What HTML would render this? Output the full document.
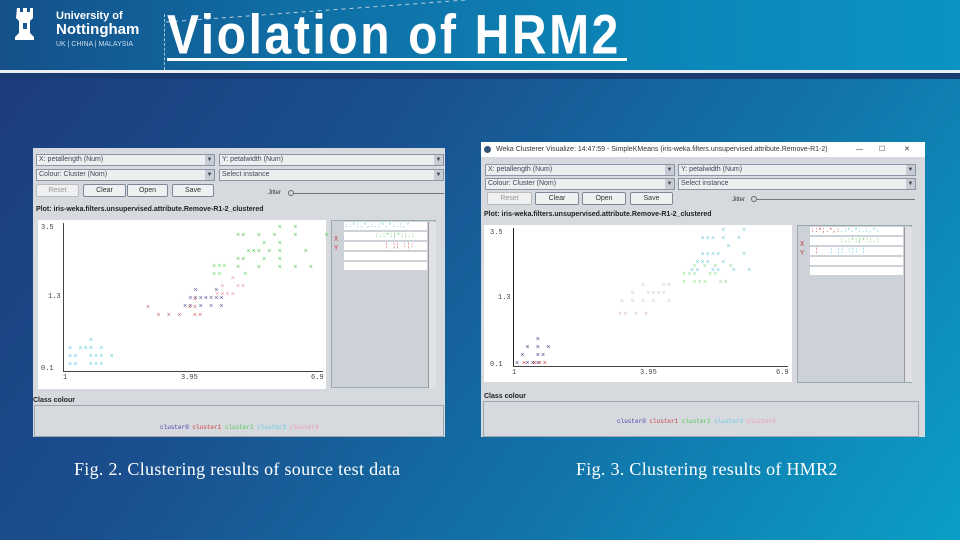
<!DOCTYPE html><html><head><meta charset="utf-8"><style>
*{margin:0;padding:0;box-sizing:border-box}
body{width:960px;height:540px;overflow:hidden;position:relative;font-family:"Liberation Sans",sans-serif;background:linear-gradient(125deg,#1c3a7c 0%,#1a4f8e 35%,#1178ac 70%,#0a9fc6 100%)}
.top{position:absolute;left:0;top:0;width:960px;height:70px;background:linear-gradient(90deg,#15508a 0%,#0f6ea4 30%,#0c86b8 70%,#0a94c2 100%)}
.wl{position:absolute;left:0;top:70px;width:960px;height:3px;background:#e8eef4}
.dk{position:absolute;left:0;top:73px;width:960px;height:6px;background:#1a3a70}
.a{position:absolute}
.panel{position:absolute;background:#d6d9de}
.cb{position:absolute;height:12px;background:#eceef0;border:1px solid #8a96a8;font-size:7px;color:#445;padding-left:2px;line-height:10px}
.cb i{position:absolute;right:0;top:0;width:9px;height:10px;background:#c8ccd4;font-style:normal;font-size:6px;text-align:center}
.bt{position:absolute;height:13px;background:#eef0f2;border:1px solid #7e8898;border-radius:2px;font-size:7px;text-align:center;line-height:11px;color:#333}
.t7{position:absolute;font-size:7px;color:#222;font-weight:bold}
.plot{position:absolute;background:#fff}
.leg{position:absolute;background:#cdd1d8;border:1px solid #9aa}
.bx{position:absolute;border:1px solid #a0a6b0;background:#d6d9de}
.p{position:absolute;font-size:7px;line-height:8px;letter-spacing:1px;white-space:pre;font-family:"Liberation Mono",monospace}
.ax{position:absolute;font-family:"Liberation Mono",monospace;font-size:7px;color:#444}
.cap{position:absolute;font-family:"Liberation Serif",serif;font-size:18px;color:#fff;white-space:nowrap}
.rows{position:absolute;background:repeating-linear-gradient(180deg,#fff 0 8px,#cdd1d8 8px 10px)}
</style></head><body>
<div class="top"></div><div class="wl"></div><div class="dk"></div>
<svg class="a" style="left:12px;top:6px" width="26" height="36" viewBox="0 0 26 36"><path d="M5 2h3v4h3V2h4v4h3V2h3v10l-3 3v12l4 4v3H3v-3l4-4V15l-3-3z" fill="#fff"/><rect x="11" y="17" width="4" height="6" fill="#1a5a92"/></svg>
<div class="a" style="left:56px;top:11px;color:#fff;font-size:11px;font-weight:bold;line-height:11px">University of</div>
<div class="a" style="left:56px;top:22px;color:#fff;font-size:15px;font-weight:bold;line-height:16px">Nottingham</div>
<div class="a" style="left:56px;top:41px;color:#cde;font-size:7px">UK | CHINA | MALAYSIA</div>
<div class="a" style="left:164px;top:14px;height:56px;border-left:1px dashed #9cc"></div>
<svg class="a" style="left:166px;top:0" width="300" height="26"><path d="M0 22 L300 0" stroke="#bcd" stroke-dasharray="4 4" fill="none"/></svg>
<div class="a" style="left:167px;top:4px;color:#fff;font-size:48px;font-weight:bold;line-height:56px;letter-spacing:2.6px;transform:scaleY(1.15);transform-origin:0 0;white-space:nowrap">Violation of HRM2</div>
<div class="a" style="left:167px;top:58px;width:460px;height:3px;background:#fff"></div>

<!-- left panel -->
<div class="panel" style="left:33px;top:148px;width:412px;height:289px"></div>
<div class="cb" style="left:36px;top:154px;width:179px">X: petallength (Num)<i>▼</i></div>
<div class="cb" style="left:219px;top:154px;width:225px">Y: petalwidth (Num)<i>▼</i></div>
<div class="cb" style="left:36px;top:169px;width:179px">Colour: Cluster (Nom)<i>▼</i></div>
<div class="cb" style="left:219px;top:169px;width:225px">Select instance<i>▼</i></div>
<div class="bt" style="left:36px;top:184px;width:43px;color:#999;border-color:#bbb">Reset</div>
<div class="bt" style="left:83px;top:184px;width:43px">Clear</div>
<div class="bt" style="left:127px;top:184px;width:41px">Open</div>
<div class="bt" style="left:172px;top:184px;width:42px">Save</div>
<div class="a" style="left:268px;top:190px;font-size:6px;color:#333">Jitter</div>
<div class="a" style="left:288px;top:190px;width:6px;height:6px;border:1px solid #666;border-radius:50%"></div>
<div class="a" style="left:294px;top:193px;width:150px;height:1px;background:#777"></div>
<div class="t7" style="left:36px;top:206px">Plot: iris-weka.filters.unsupervised.attribute.Remove-R1-2_clustered</div>
<div class="plot" style="left:38px;top:220px;width:288px;height:169px"></div>
<div class="a" style="left:63px;top:223px;width:1px;height:148px;background:#444"></div>
<div class="a" style="left:63px;top:371px;width:260px;height:1px;background:#444"></div>
<div class="ax" style="left:41px;top:224px">3.5</div><div class="ax" style="left:48px;top:293px">1.3</div><div class="ax" style="left:41px;top:365px">0.1</div>
<div class="ax" style="left:63px;top:374px">1</div><div class="ax" style="left:181px;top:374px">3.95</div><div class="ax" style="left:311px;top:374px">6.9</div>
<div class="p" style="left:236px;top:224px;color:#5c5">        ×  ×
××  ×  ×   ×     ×
     ×  ×
  ××× × ×    ×
××   ×  ×
×   ×   ×  ×  ×</div>
<div class="p" style="left:212px;top:263px;color:#6d6">×××
××    ×</div>
<div class="p" style="left:215px;top:275px;color:#e9a">   ×
 ×  ××
××××</div>
<div class="p" style="left:183px;top:287px;color:#559">  ×   ×
 ×××××××
×× × × ×</div>
<div class="p" style="left:146px;top:296px;color:#c66">         ×
×       ××
  × × ×  ××</div>
<div class="p" style="left:68px;top:337px;color:#6cd">    ×
× ××× ×
××  ××× ×
××  ×××</div>
<div class="leg" style="left:331px;top:220px;width:105px;height:168px"></div>
<div class="rows" style="left:344px;top:222px;width:83px;height:50px"></div>
<div class="p" style="left:345px;top:222px;color:#6cd;font-size:6px;letter-spacing:0">::*:.*,:.:*.*:.:,*</div>
<div class="p" style="left:375px;top:232px;color:#5c5;font-size:6px;letter-spacing:0">:.:*:|*::.:</div>
<div class="p" style="left:385px;top:242px;color:#c44;font-size:6px;letter-spacing:0">¦ ¦¦ :¦:</div>
<div class="p" style="left:334px;top:236px;color:#c44;font-size:7px;line-height:9px">X
Y</div>
<div class="a" style="left:428px;top:222px;width:8px;height:166px;background:#e0e2e6;border-left:1px solid #999"></div>
<div class="a" style="left:33px;top:397px;font-size:7px;font-weight:bold;color:#222">Class colour</div>
<div class="bx" style="left:34px;top:405px;width:410px;height:32px"></div>
<div class="a" style="left:160px;top:424px;font-family:'Liberation Mono',monospace;font-size:6px"><span style="color:#44a">cluster0</span> <span style="color:#c44">cluster1</span> <span style="color:#5c5">cluster2</span> <span style="color:#6cd">cluster3</span> <span style="color:#e9a">cluster4</span></div>

<!-- right panel -->
<div class="panel" style="left:481px;top:142px;width:444px;height:295px"></div>
<div class="a" style="left:481px;top:142px;width:444px;height:15px;background:#fff;font-size:7px;color:#333;line-height:15px;padding-left:15px;white-space:nowrap">Weka Clusterer Visualize: 14:47:59 - SimpleKMeans (iris-weka.filters.unsupervised.attribute.Remove-R1-2)<span style="position:absolute;left:375px">—</span><span style="position:absolute;left:398px">☐</span><span style="position:absolute;left:423px">✕</span></div>
<div class="a" style="left:484px;top:146px;width:7px;height:7px;border-radius:50%;background:#357"></div>
<div class="cb" style="left:485px;top:164px;width:190px">X: petallength (Num)<i>▼</i></div>
<div class="cb" style="left:678px;top:164px;width:238px">Y: petalwidth (Num)<i>▼</i></div>
<div class="cb" style="left:485px;top:178px;width:190px">Colour: Cluster (Nom)<i>▼</i></div>
<div class="cb" style="left:678px;top:178px;width:238px">Select instance<i>▼</i></div>
<div class="bt" style="left:487px;top:192px;width:45px;color:#999;border-color:#bbb">Reset</div>
<div class="bt" style="left:535px;top:192px;width:44px">Clear</div>
<div class="bt" style="left:582px;top:192px;width:44px">Open</div>
<div class="bt" style="left:630px;top:192px;width:43px">Save</div>
<div class="a" style="left:732px;top:197px;font-size:6px;color:#333">Jitter</div>
<div class="a" style="left:751px;top:196px;width:6px;height:6px;border:1px solid #666;border-radius:50%"></div>
<div class="a" style="left:757px;top:199px;width:158px;height:1px;background:#777"></div>
<div class="t7" style="left:484px;top:211px">Plot: iris-weka.filters.unsupervised.attribute.Remove-R1-2_clustered</div>
<div class="plot" style="left:484px;top:225px;width:308px;height:157px"></div>
<div class="a" style="left:513px;top:228px;width:1px;height:138px;background:#222"></div>
<div class="a" style="left:513px;top:366px;width:275px;height:1px;background:#444"></div>
<div class="ax" style="left:490px;top:229px">3.5</div><div class="ax" style="left:498px;top:294px">1.3</div><div class="ax" style="left:490px;top:361px">0.1</div>
<div class="ax" style="left:512px;top:369px">1</div><div class="ax" style="left:640px;top:369px">3.95</div><div class="ax" style="left:776px;top:369px">6.9</div>
<div class="p" style="left:690px;top:227px;color:#7cd">      ×   ×
  ××× ×  ×
       ×
  ××××    ×
 ×××  ×
××  ××  ×  ×</div>
<div class="p" style="left:682px;top:263px;color:#9d9">  × × ×  ×
×××  ××
× ×××  ××</div>
<div class="p" style="left:620px;top:282px;color:#ccc">    ×   ××
  ×  ××××
× × × ×  ×</div>
<div class="p" style="left:618px;top:311px;color:#dbb">×× × ×</div>
<div class="p" style="left:515px;top:336px;color:#448">    ×
  × × ×
 ×  ××
× ×××</div>
<div class="p" style="left:522px;top:360px;color:#c44">× ×××</div>
<div class="leg" style="left:797px;top:225px;width:115px;height:158px"></div>
<div class="rows" style="left:810px;top:227px;width:93px;height:50px"></div>
<div class="p" style="left:811px;top:227px;color:#c44;font-size:6px;letter-spacing:0">::*;.*,:<span style="color:#6cd">.:*.*:.:,*:</span></div>
<div class="p" style="left:840px;top:237px;color:#5c5;font-size:6px;letter-spacing:0">:.:*:|*::.:</div>
<div class="p" style="left:815px;top:247px;color:#c44;font-size:6px;letter-spacing:0">¦   <span style="color:#6cd">¦ ¦¦ :¦: ¦</span></div>
<div class="p" style="left:800px;top:241px;color:#c44;font-size:7px;line-height:9px">X
Y</div>
<div class="a" style="left:904px;top:227px;width:8px;height:155px;background:#e0e2e6;border-left:1px solid #999"></div>
<div class="a" style="left:484px;top:393px;font-size:7px;font-weight:bold;color:#222">Class colour</div>
<div class="bx" style="left:483px;top:401px;width:436px;height:36px"></div>
<div class="a" style="left:617px;top:418px;font-family:'Liberation Mono',monospace;font-size:6px"><span style="color:#44a">cluster0</span> <span style="color:#c44">cluster1</span> <span style="color:#5c5">cluster2</span> <span style="color:#6cd">cluster3</span> <span style="color:#e9a">cluster4</span></div>

<div class="cap" style="left:74px;top:459px;letter-spacing:0.3px">Fig. 2. Clustering results of source test data</div>
<div class="cap" style="left:576px;top:459px;letter-spacing:0.3px">Fig. 3. Clustering results of HMR2</div>
</body></html>
